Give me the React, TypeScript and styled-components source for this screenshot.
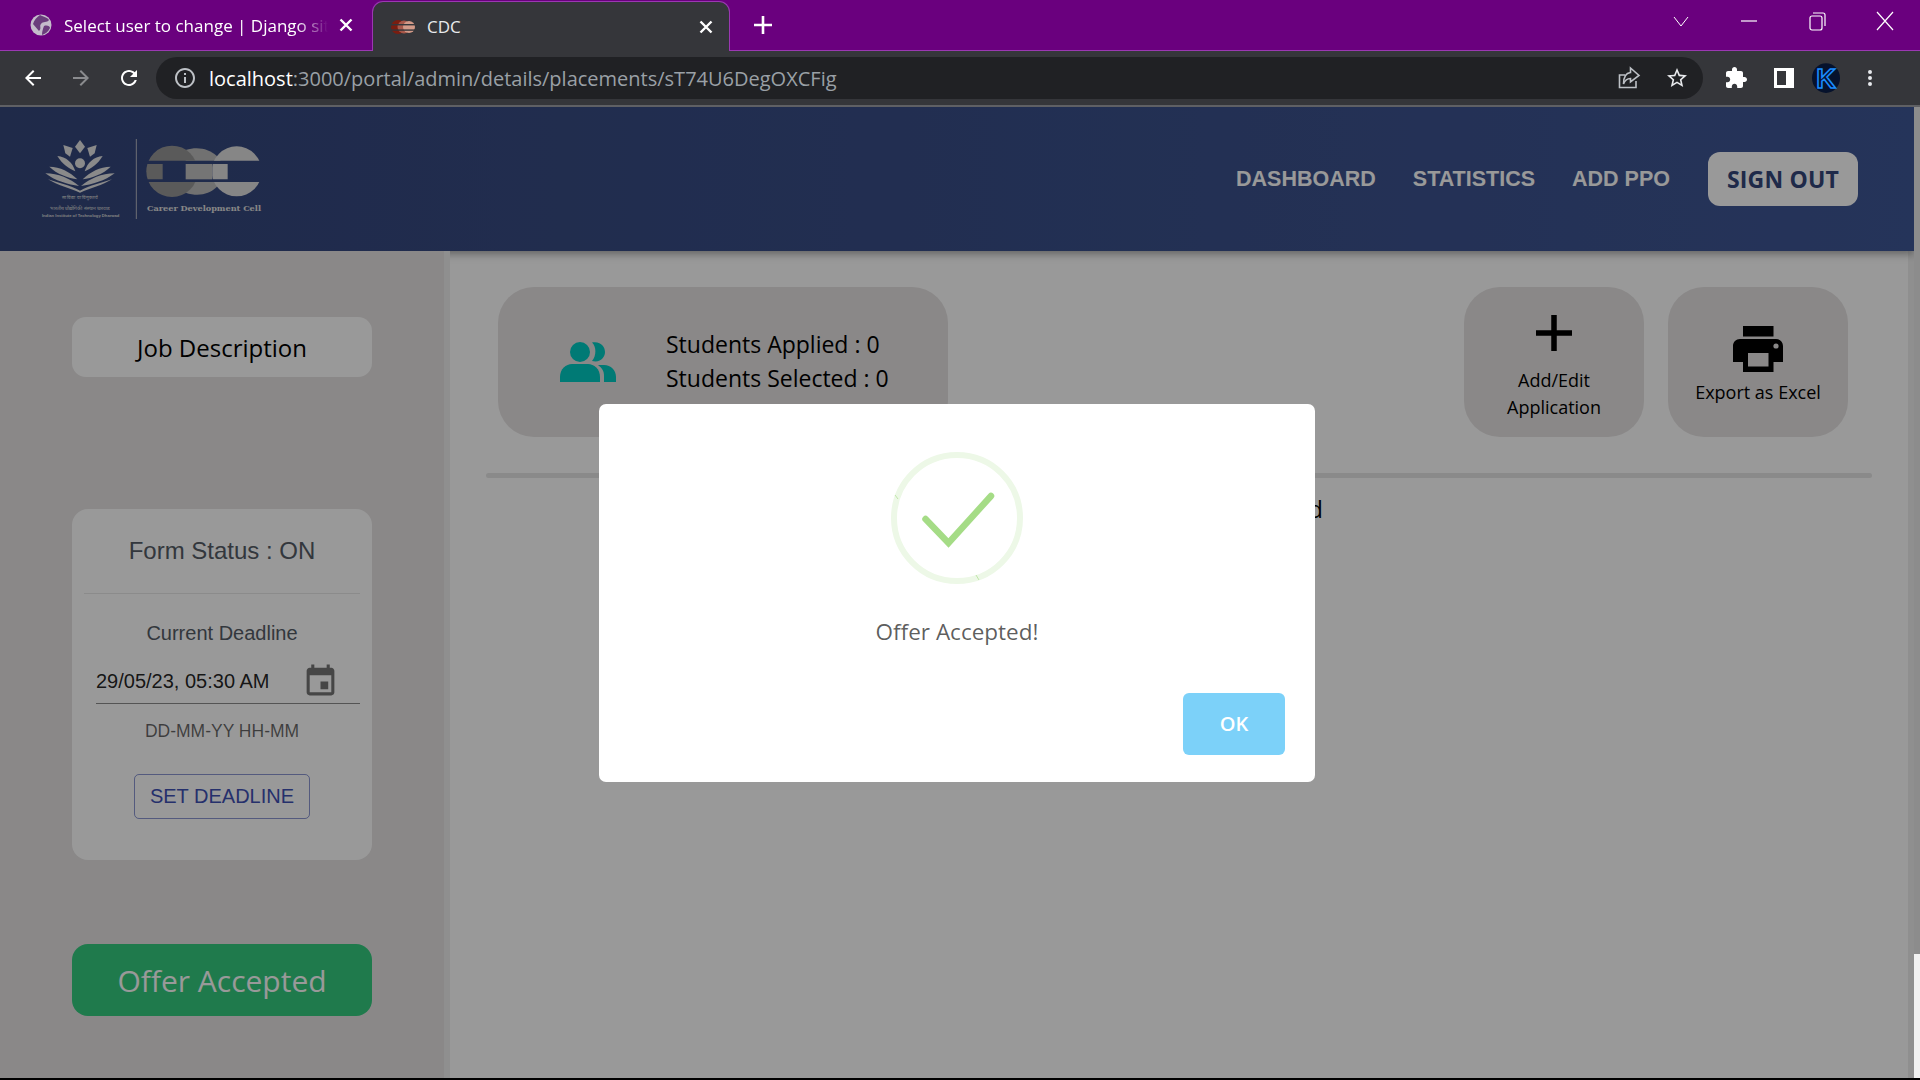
import React from "react";
import styled, { createGlobalStyle } from "styled-components";

const Global = createGlobalStyle`
  html, body { margin: 0; padding: 0; background: #000; overflow: hidden; }
  * { box-sizing: border-box; }
  body { font-family: "Open Sans", "Liberation Sans", sans-serif; }
`;

const Shell = styled.div`
  width: 1920px;
  height: 1080px;
  display: flex;
  flex-direction: column;
  background: #000;
  overflow: hidden;
`;

/* ---------- browser chrome ---------- */
const TabStrip = styled.div`
  height: 51px;
  flex: none;
  display: flex;
  align-items: flex-end;
  background: #6a007e;
  border-bottom: 1px solid #9b38b2;
  position: relative;
`;
const Tab = styled.div`
  width: 342px;
  margin-left: 30px;
  height: 50px;
  display: flex;
  align-items: center;
  color: #fff;
  font-size: 17px;
  padding-left: 0;
`;
const ActiveTab = styled.div`
  position: relative;
  width: 358px;
  height: 50px;
  margin-bottom: -1px;
  display: flex;
  align-items: center;
  padding: 0 16px 0 18px;
  background: #35363a;
  color: #e8eaed;
  font-size: 17px;
  border: 1px solid #9b38b2;
  border-bottom: none;
  border-radius: 11px 11px 0 0;
`;
const TabTitle = styled.span`
  width: 264px;
  margin-left: 12px;
  white-space: nowrap;
  overflow: hidden;
  -webkit-mask-image: linear-gradient(90deg, #000 88%, transparent 100%);
  mask-image: linear-gradient(90deg, #000 88%, transparent 100%);
`;
const ActiveTitle = styled.span`
  flex: 1;
  margin-left: 12px;
`;
const TabClose = styled.span`
  width: 14px;
  height: 14px;
  display: flex;
  margin-left: 11px;
`;
const NewTab = styled.div`
  width: 22px;
  height: 50px;
  margin-left: 22px;
  display: flex;
  align-items: center;
  justify-content: center;
`;
const WindowControls = styled.div`
  margin-left: auto;
  height: 42px;
  align-self: flex-start;
  display: flex;
  align-items: center;
  padding-right: 25px;
  gap: 48px;
`;
const WinButton = styled.span<{ $w?: number }>`
  width: ${(p) => p.$w ?? 20}px;
  height: 20px;
  display: flex;
`;
const Toolbar = styled.div`
  height: 54px;
  flex: none;
  display: flex;
  align-items: center;
  background: #35363a;
  padding-left: 21px;
`;
const ToolButton = styled.span<{ $gap?: number }>`
  width: 24px;
  height: 24px;
  display: flex;
  margin-right: ${(p) => p.$gap ?? 24}px;
`;
const Omnibox = styled.div`
  width: 1547px;
  height: 42px;
  margin-right: 21px;
  margin-left: -9px;
  border-radius: 21px;
  background: #202124;
  display: flex;
  align-items: center;
  padding: 0 14px 0 17px;
`;
const Url = styled.div`
  flex: 1;
  margin-left: 12px;
  font-size: 20px;
  color: #9aa0a6;
  white-space: nowrap;
`;
const UrlHost = styled.span`
  color: #fff;
`;
const ToolEdge = styled.div`
  height: 2px;
  flex: none;
  background: #5f6064;
`;

/* ---------- page ---------- */
const Page = styled.div`
  height: 971px;
  flex: none;
  display: flex;
`;
const PageBody = styled.div`
  position: relative;
  width: 1914px;
  display: flex;
  flex-direction: column;
  background: #fff;
  overflow: hidden;
`;
const Scrollbar = styled.div`
  width: 6px;
  display: flex;
  flex-direction: column;
  background: #f1f1f1;
`;
const ScrollThumb = styled.div`
  height: 847px;
  background: #8c8c8c;
`;
const Header = styled.header`
  height: 144px;
  flex: none;
  position: relative;
  z-index: 1;
  display: flex;
  align-items: center;
  padding: 0 56px 0 20px;
  background: linear-gradient(90deg, #34467b, #3f5796);
  box-shadow: 0 3px 8px rgba(0, 0, 0, 0.35);
`;
const Nav = styled.nav`
  margin-left: auto;
  display: flex;
  align-items: center;
  gap: 37px;
`;
const NavLink = styled.a`
  font-family: "Liberation Sans", sans-serif;
  font-weight: 700;
  font-size: 21.5px;
  color: #fff;
`;
const SignOut = styled.button`
  width: 150px;
  height: 54px;
  margin-left: 1px;
  border: none;
  border-radius: 12px;
  background: #fff;
  color: #34467b;
  font-family: "Open Sans", sans-serif;
  font-weight: 700;
  font-size: 23px;
  letter-spacing: 0.2px;
`;
const Columns = styled.div`
  flex: 1;
  display: flex;
  min-height: 0;
`;
const Sidebar = styled.aside`
  position: relative;
  z-index: 2;
  width: 450px;
  flex: none;
  padding: 66px 72px 0;
  background: #e6e3e3;
  border-right: 6px solid #efefef;
  display: flex;
  flex-direction: column;
`;
const JobCard = styled.div`
  height: 60px;
  flex: none;
  border-radius: 14px;
  background: #fff;
  display: flex;
  align-items: center;
  justify-content: center;
  font-size: 24px;
  color: #000;
`;
const FormCard = styled.section`
  margin-top: 132px;
  height: 351px;
  flex: none;
  border-radius: 16px;
  background: #fff;
  display: flex;
  flex-direction: column;
  align-items: center;
  padding-top: 28px;
  font-family: "Liberation Sans", sans-serif;
  color: #555c66;
`;
const FormTitle = styled.div`
  font-size: 24px;
  line-height: 28px;
`;
const CardRule = styled.hr`
  width: 276px;
  height: 1px;
  margin: 28px 0 0;
  border: none;
  background: #e8e8e8;
`;
const FieldLabel = styled.div`
  margin-top: 27px;
  font-size: 20px;
  line-height: 24px;
`;
const DateField = styled.div`
  align-self: flex-end;
  width: 264px;
  height: 44px;
  margin: 15px 12px 0 0;
  display: flex;
  align-items: center;
  justify-content: space-between;
  padding-right: 21px;
  border-bottom: 1px solid #8c8c8c;
  color: rgba(0, 0, 0, 0.87);
  font-size: 20px;
`;
const Helper = styled.div`
  margin-top: 17px;
  font-size: 17.5px;
  line-height: 20px;
  color: rgba(0, 0, 0, 0.6);
`;
const SetDeadline = styled.button`
  width: 176px;
  height: 45px;
  margin-top: 33px;
  border: 1px solid rgba(63, 81, 181, 0.6);
  border-radius: 5px;
  background: transparent;
  color: #3f51b5;
  font-family: "Liberation Sans", sans-serif;
  font-size: 20px;
`;
const OfferAccepted = styled.button`
  margin-top: 84px;
  height: 72px;
  flex: none;
  border: none;
  border-radius: 16px;
  background: #34cb7f;
  color: #fff;
  font-family: "Open Sans", sans-serif;
  font-size: 30px;
`;
const Main = styled.main`
  flex: 1;
  padding: 36px 0 0;
  border-right: 6px solid #efefef;
  display: flex;
  flex-direction: column;
`;
const TopRow = styled.div`
  display: flex;
  padding: 0 60px 0 48px;
  gap: 24px;
`;
const StatsCard = styled.div`
  width: 450px;
  height: 150px;
  margin-right: auto;
  border-radius: 36px;
  background: #e6e3e3;
  display: flex;
  align-items: center;
  padding-left: 62px;
`;
const StatsText = styled.div`
  margin-left: 50px;
  font-size: 23px;
  line-height: 34px;
  color: #000;
  padding-bottom: 2px;
`;
const ActionCard = styled.div<{ $pad: number }>`
  width: 180px;
  height: 150px;
  border-radius: 36px;
  background: #e6e3e3;
  display: flex;
  flex-direction: column;
  align-items: center;
  padding-top: ${(p) => p.$pad}px;
  font-size: 18px;
  line-height: 27px;
  color: #000;
  text-align: center;
`;
const ActionLabel = styled.div<{ $top: number }>`
  margin-top: ${(p) => p.$top}px;
`;
const Divider = styled.div`
  height: 5px;
  margin: 36px 36px 0;
  border-radius: 3px;
  background: #e6e6e6;
`;
const EmptyMsg = styled.div`
  margin-top: 14px;
  padding-right: 585px;
  text-align: right;
  font-size: 24px;
  line-height: 34px;
  color: #000;
`;

/* ---------- dialog ---------- */
const Overlay = styled.div`
  position: absolute;
  inset: 0;
  z-index: 5;
  background: rgba(0, 0, 0, 0.4);
  display: flex;
  align-items: center;
  justify-content: center;
`;
const Dialog = styled.div`
  width: 716px;
  height: 378px;
  border-radius: 7px;
  background: #fff;
  display: flex;
  flex-direction: column;
  align-items: center;
  padding-top: 48px;
`;
const DialogText = styled.div`
  margin-top: 30px;
  font-size: 22.5px;
  line-height: 36px;
  font-weight: 400;
  color: rgba(0, 0, 0, 0.65);
`;
const DialogFooter = styled.div`
  align-self: stretch;
  display: flex;
  justify-content: flex-end;
  margin-top: 43px;
  padding-right: 30px;
`;
const OkButton = styled.button`
  width: 102px;
  height: 62px;
  border: none;
  border-radius: 6px;
  background: #7cd1f9;
  color: #fff;
  font-family: "Open Sans", sans-serif;
  font-weight: 600;
  font-size: 20px;
`;

const Logo = () => (
  <svg width="260" height="110" viewBox="0 12 780 330">
    <g fill="#e6e6e6">
      <path d="M180 60 L195 80 L180 100 L165 80 Z" />
      <circle cx="180" cy="130" r="15" />
      {[0, 1].map((i) => (
        <g key={i} transform={i ? "translate(360,0) scale(-1,1)" : undefined}>
          <path d="M130 75 L158 84 L150 110 L136 100 Z" />
          <path d="M112 108 C138 110 158 128 166 154 C148 146 126 132 112 108 Z" />
          <path d="M88 140 C120 140 150 156 172 178 C145 174 110 162 88 140 Z" />
          <path d="M76 160 C115 160 150 176 177 198 C145 194 104 182 76 160 Z" />
          <path d="M84 178 C115 188 150 196 180 212 L180 218 C150 204 112 196 84 178 Z" />
        </g>
      ))}
    </g>
    <g fill="#d8d8d8" textAnchor="middle" fontFamily="'Liberation Sans', sans-serif">
      <text x="180" y="236" fontSize="14">सा विद्या या विमुक्तये</text>
      <text x="180" y="270" fontSize="15">भारतीय प्रौद्योगिकी संस्थान धारवाड</text>
      <text x="182" y="292" fontSize="12.5" fontWeight="700">Indian Institute of Technology Dharwad</text>
    </g>
    <rect x="347.5" y="57" width="3" height="240" fill="#b5b8c2" />
    <defs>
      <clipPath id="logoBands">
        <rect x="370" y="70" width="370" height="52" />
        <rect x="370" y="186" width="370" height="52" />
      </clipPath>
      <clipPath id="logoMidLeft">
        <rect x="370" y="132" width="58" height="46" />
      </clipPath>
      <clipPath id="logoMidRight">
        <rect x="577" y="132" width="46" height="46" />
      </clipPath>
    </defs>
    <g clipPath="url(#logoBands)">
      <path d="M497 90 C560 70 610 110 612 154 C610 200 560 240 497 218 Z" fill="#bcbcbc" />
      <circle cx="456" cy="154" r="77" fill="#979797" />
      <circle cx="650" cy="154" r="75" fill="#e0e0e0" />
    </g>
    <circle cx="456" cy="154" r="77" fill="#979797" clipPath="url(#logoMidLeft)" />
    <rect x="497" y="132" width="80" height="46" fill="#c4c4c4" />
    <circle cx="650" cy="154" r="75" fill="#e0e0e0" clipPath="url(#logoMidRight)" />
    <text x="552" y="274" textAnchor="middle" fill="#e0e0e0" fontFamily="'DejaVu Serif', serif" fontWeight="700" fontSize="24.5" textLength="342">
      Career Development Cell
    </text>
  </svg>
);

const XIcon = () => (
  <svg width="14" height="14" viewBox="0 0 14 14">
    <path d="M1.5 1.5 L12.5 12.5 M12.5 1.5 L1.5 12.5" stroke="#fff" strokeWidth="2.4" />
  </svg>
);

const Globe = () => (
  <svg width="22" height="22" viewBox="0 0 22 22">
    <circle cx="11" cy="11" r="10.5" fill="#c4bccb" />
    <path d="M10 1 C14 3 17 3 19 6 C17 9 13 7 11 10 C9 12 12 14 9 17 C7 15 5 12 3 10 C4 6 7 3 10 1 Z" fill="#6a3d7c" />
    <path d="M14 12 C17 11 20 12 20 14 C18 18 15 20 12 21 C12 17 13 15 14 12 Z" fill="#6a3d7c" />
  </svg>
);

const CdcFavicon = () => (
  <svg width="24" height="16" viewBox="0 0 24 16">
    <circle cx="7" cy="8" r="7" fill="#7a1d10" />
    <circle cx="13" cy="8" r="6.5" fill="#a8584a" />
    <circle cx="18" cy="8" r="6" fill="#d39a88" />
    <rect x="0" y="5" width="24" height="1.4" fill="#35363a" />
    <rect x="0" y="10.4" width="24" height="1.4" fill="#35363a" />
  </svg>
);

const UsersIcon = () => (
  <svg width="56" height="40" viewBox="0 0 56 40" fill="#00cbc3">
    <circle cx="20" cy="10" r="10" />
    <path d="M0 40 L0 35 C0 27 6 22 12 22 L28 22 C34 22 40 27 40 35 L40 40 Z" />
    <path d="M32 0.6 C41 -1 45 5 45 10 C45 15 41 21 32 19 C36 15 37 5 32 0.6 Z" />
    <path d="M38 23 L44 23 C51 23 56 28 56 35 L56 40 L44 40 L44 34 C44 29 42 26 38 23 Z" />
  </svg>
);

const Printer = () => (
  <svg width="50" height="46" viewBox="0 0 50 46">
    <rect x="10" y="0" width="30.5" height="10.5" fill="#000" />
    <path d="M7 13 H43 C47 13 50 16 50 20 V36 H40.5 V46 H10 V36 H0 V20 C0 16 3 13 7 13 Z" fill="#000" />
    <rect x="15" y="27" width="20.5" height="13.5" fill="#e6e3e3" />
    <circle cx="43" cy="20" r="2.6" fill="#e6e3e3" />
  </svg>
);

const EventIcon = () => (
  <svg width="37" height="37" viewBox="0 0 24 24" fill="rgba(0,0,0,0.54)">
    <path d="M17 12h-5v5h5v-5zM16 1v2H8V1H6v2H5c-1.11 0-1.99.9-1.99 2L3 19c0 1.1.89 2 2 2h14c1.1 0 2-.9 2-2V5c0-1.1-.9-2-2-2h-1V1h-2zm3 18H5V8h14v11z" />
  </svg>
);

const SuccessIcon = () => (
  <svg width="132" height="132" viewBox="0 0 132 132">
    <circle cx="66" cy="66" r="63" fill="none" stroke="#edf8e7" strokeWidth="6" />
    <path d="M4 43 L7 47 M85 123 L88 128" stroke="#bfe6a9" strokeWidth="1" />
    <path d="M34.5 67 L57.5 91 L100 44" fill="none" stroke="#a5dc86" strokeWidth="6.5" strokeLinecap="round" />
  </svg>
);

const Icon = ({ d, fill = "#fff" }: { d: string; fill?: string }) => (
  <svg width="24" height="24" viewBox="0 0 24 24" fill={fill}>
    <path d={d} />
  </svg>
);

const ARROW = "M20 11H7.83l5.59-5.59L12 4l-8 8 8 8 1.41-1.41L7.83 13H20v-2z";
const ARROW_R = "M4 11h12.17l-5.59-5.59L12 4l8 8-8 8-1.41-1.41L16.17 13H4v-2z";
const RELOAD = "M17.65 6.35C16.2 4.9 14.21 4 12 4c-4.42 0-7.99 3.58-7.99 8s3.57 8 7.99 8c3.73 0 6.84-2.55 7.73-6h-2.08c-.82 2.33-3.04 4-5.65 4-3.31 0-6-2.69-6-6s2.69-6 6-6c1.66 0 3.14.69 4.22 1.78L13 11h7V4l-2.35 2.35z";
const STAR = "M22 9.24l-7.19-.62L12 2 9.19 8.63 2 9.24l5.46 4.73L5.82 21 12 17.27 18.18 21l-1.63-7.03L22 9.24zM12 15.4l-3.76 2.27 1-4.28-3.32-2.88 4.38-.38L12 6.1l1.71 4.04 4.38.38-3.32 2.88 1 4.28L12 15.4z";
const PUZZLE = "M20.5 11H19V7c0-1.1-.9-2-2-2h-4V3.5C13 2.12 11.88 1 10.5 1S8 2.12 8 3.5V5H4c-1.1 0-1.99.9-1.99 2v3.8H3.5c1.49 0 2.7 1.21 2.7 2.7s-1.21 2.7-2.7 2.7H2V20c0 1.1.9 2 2 2h3.8v-1.5c0-1.49 1.21-2.7 2.7-2.7 1.49 0 2.7 1.21 2.7 2.7V22H17c1.1 0 2-.9 2-2v-4h1.5c1.38 0 2.5-1.12 2.5-2.5S21.88 11 20.5 11z";
const INFO = "M11 7h2v2h-2zm0 4h2v6h-2zm1-9C6.48 2 2 6.48 2 12s4.48 10 10 10 10-4.48 10-10S17.52 2 12 2zm0 18c-4.41 0-8-3.59-8-8s3.59-8 8-8 8 3.59 8 8-3.59 8-8 8z";
const DOTS = "M12 8a2 2 0 1 0 0-4 2 2 0 0 0 0 4zm0 2a2 2 0 1 0 0 4 2 2 0 0 0 0-4zm0 6a2 2 0 1 0 0 4 2 2 0 0 0 0-4z";

export default function App() {
  return (
    <Shell>
      <Global />
      <TabStrip>
        <Tab>
          <Globe />
          <TabTitle>Select user to change | Django site admin</TabTitle>
          <TabClose>
            <XIcon />
          </TabClose>
        </Tab>
        <ActiveTab>
          <CdcFavicon />
          <ActiveTitle>CDC</ActiveTitle>
          <TabClose>
            <XIcon />
          </TabClose>
        </ActiveTab>
        <NewTab>
          <svg width="20" height="20" viewBox="0 0 20 20">
            <path d="M10 1 V19 M1 10 H19" stroke="#fff" strokeWidth="2.6" />
          </svg>
        </NewTab>
        <WindowControls>
          <WinButton>
            <svg width="20" height="20" viewBox="0 0 20 20" fill="none" stroke="#fff" strokeWidth="1">
              <path d="M3 6 L10 15 L17 6" />
            </svg>
          </WinButton>
          <WinButton>
            <svg width="20" height="20" viewBox="0 0 20 20" fill="none" stroke="#fff" strokeWidth="1.2">
              <path d="M2 10 H18" />
            </svg>
          </WinButton>
          <WinButton>
            <svg width="20" height="20" viewBox="0 0 20 20" fill="none" stroke="#fff" strokeWidth="1.2">
              <rect x="3" y="5" width="12" height="14" rx="2" />
              <path d="M6 2 H16 Q18 2 18 4 V15" />
            </svg>
          </WinButton>
          <WinButton>
            <svg width="20" height="20" viewBox="0 0 20 20" fill="none" stroke="#fff" strokeWidth="1.2">
              <path d="M2 1 L18 19 M18 1 L2 19" />
            </svg>
          </WinButton>
        </WindowControls>
      </TabStrip>
      <Toolbar>
        <ToolButton>
          <Icon d={ARROW} />
        </ToolButton>
        <ToolButton>
          <Icon d={ARROW_R} fill="#8a8b8e" />
        </ToolButton>
        <ToolButton $gap={24}>
          <Icon d={RELOAD} />
        </ToolButton>
        <Omnibox>
          <ToolButton $gap={0}>
            <Icon d={INFO} fill="#bdc1c6" />
          </ToolButton>
          <Url>
            <UrlHost>localhost</UrlHost>:3000/portal/admin/details/placements/sT74U6DegOXCFig
          </Url>
          <ToolButton>
            <svg width="24" height="24" viewBox="0 0 24 24" fill="none" stroke="#bdc1c6" strokeWidth="1.6">
              <path d="M19 15 V21.5 H2.5 V9 H8" />
              <path d="M13.5 2 L22 9.5 L13.5 16 V12.5 C10 12.5 8 14 6.5 18 C6.5 11 9 7 13.5 6.5 Z" />
            </svg>
          </ToolButton>
          <ToolButton $gap={0}>
            <Icon d={STAR} fill="#e8eaed" />
          </ToolButton>
        </Omnibox>
        <ToolButton $gap={24}>
          <Icon d={PUZZLE} />
        </ToolButton>
        <ToolButton $gap={20}>
          <svg width="24" height="24" viewBox="0 0 24 24">
            <path fillRule="evenodd" d="M2 2 H22 V22 H2 Z M5 5 V19 H14 V5 Z" fill="#fff" />
          </svg>
        </ToolButton>
        <ToolButton $gap={18}>
          <svg width="32" height="34" viewBox="0 0 32 34" style={{ marginTop: -5, marginLeft: -4 }}>
            <ellipse cx="16" cy="17" rx="16" ry="17" fill="#06122c" />
            <text x="16" y="28" textAnchor="middle" fontFamily="'Liberation Sans', sans-serif" fontWeight="700" fontSize="31" fill="#06122c" stroke="#1a8cff" strokeWidth="1.8">
              K
            </text>
          </svg>
        </ToolButton>
        <ToolButton $gap={0}>
          <Icon d={DOTS} fill="#e8eaed" />
        </ToolButton>
      </Toolbar>
      <ToolEdge />
      <Page>
        <PageBody>
          <Header>
            <Logo />
            <Nav>
              <NavLink>DASHBOARD</NavLink>
              <NavLink>STATISTICS</NavLink>
              <NavLink>ADD PPO</NavLink>
              <SignOut>SIGN OUT</SignOut>
            </Nav>
          </Header>
          <Columns>
            <Sidebar>
              <JobCard>Job Description</JobCard>
              <FormCard>
                <FormTitle>Form Status : ON</FormTitle>
                <CardRule />
                <FieldLabel>Current Deadline</FieldLabel>
                <DateField>
                  <span>29/05/23, 05:30 AM</span>
                  <EventIcon />
                </DateField>
                <Helper>DD-MM-YY HH-MM</Helper>
                <SetDeadline>SET DEADLINE</SetDeadline>
              </FormCard>
              <OfferAccepted>Offer Accepted</OfferAccepted>
            </Sidebar>
            <Main>
              <TopRow>
                <StatsCard>
                  <UsersIcon />
                  <StatsText>
                    <div>Students Applied : 0</div>
                    <div>Students Selected : 0</div>
                  </StatsText>
                </StatsCard>
                <ActionCard $pad={28}>
                  <svg width="36" height="36" viewBox="0 0 36 36">
                    <path d="M18 0 V36 M0 18 H36" stroke="#000" strokeWidth="5.5" />
                  </svg>
                  <ActionLabel $top={16}>
                    Add/Edit
                    <br />
                    Application
                  </ActionLabel>
                </ActionCard>
                <ActionCard $pad={39}>
                  <Printer />
                  <ActionLabel $top={7}>Export as Excel</ActionLabel>
                </ActionCard>
              </TopRow>
              <Divider />
              <EmptyMsg>No Students Applied</EmptyMsg>
            </Main>
          </Columns>
          <Overlay>
            <Dialog>
              <SuccessIcon />
              <DialogText>Offer Accepted!</DialogText>
              <DialogFooter>
                <OkButton>OK</OkButton>
              </DialogFooter>
            </Dialog>
          </Overlay>
        </PageBody>
        <Scrollbar>
          <ScrollThumb />
        </Scrollbar>
      </Page>
    </Shell>
  );
}
